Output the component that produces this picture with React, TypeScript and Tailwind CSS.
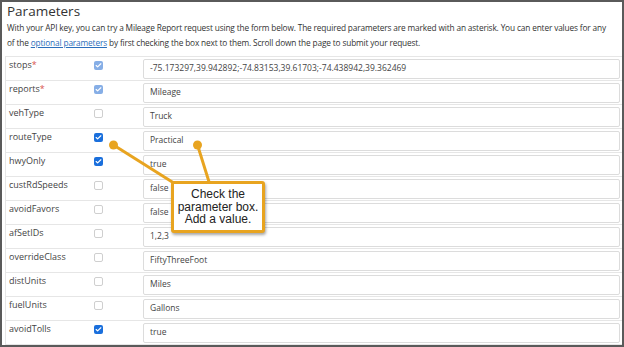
import { Check } from "lucide-react";

type Row = { name: string; value: string; state: "req" | "on" | "off"; required?: boolean };

const rows: Row[] = [
  { name: "stops", value: "-75.173297,39.942892;-74.83153,39.61703;-74.438942,39.362469", state: "req", required: true },
  { name: "reports", value: "Mileage", state: "req", required: true },
  { name: "vehType", value: "Truck", state: "off" },
  { name: "routeType", value: "Practical", state: "on" },
  { name: "hwyOnly", value: "true", state: "on" },
  { name: "custRdSpeeds", value: "false", state: "off" },
  { name: "avoidFavors", value: "false", state: "off" },
  { name: "afSetIDs", value: "1,2,3", state: "off" },
  { name: "overrideClass", value: "FiftyThreeFoot", state: "off" },
  { name: "distUnits", value: "Miles", state: "off" },
  { name: "fuelUnits", value: "Gallons", state: "off" },
  { name: "avoidTolls", value: "true", state: "on" },
];

function Box({ state }: { state: Row["state"] }) {
  if (state === "off") {
    return <span className="block h-[9px] w-[9px] rounded-[2px] border border-[#cfcfcf] bg-white" />;
  }
  return (
    <span
      className={
        "flex h-[9px] w-[9px] items-center justify-center rounded-[2px] " +
        (state === "req" ? "bg-[#86aee6]" : "bg-[#1a6fdc]")
      }
    >
      <Check size={7} strokeWidth={4} color="white" />
    </span>
  );
}

export default function App() {
  return (
    <div
      className="relative h-[347px] w-[624px] overflow-hidden border-2 border-[#5a5a5a] bg-white text-[#333]"
      style={{ fontFamily: '"Open Sans", sans-serif' }}
    >
      <div className="px-[5px]">
        <h2 className="text-[13.5px] leading-[18px] text-[#333]">Parameters</h2>
        <p className="whitespace-nowrap text-[8.3px] leading-[15px] tracking-[-0.15px] text-[#333]">
          With your API key, you can try a Mileage Report request using the form below. The required parameters are
          marked with an asterisk. You can enter values for any
          <br />
          of the <span className="text-[#2a6ebb] underline">optional parameters</span> by first checking the box next to
          them. Scroll down the page to submit your request.
        </p>
      </div>

      <div className="mt-[6px] ml-[3px] border-t border-l border-[#e6e6e6]">
        {rows.map((r) => (
          <div key={r.name} className="flex h-[24px] border-b border-[#e6e6e6]">
            <div className="w-[84px] pl-[3px] pt-[1px] text-[9px] leading-[14px] text-[#444]">
              {r.name}
              {r.required && <span className="text-[#d9534f]">*</span>}
            </div>
            <div className="w-[53px] pl-[4px] pt-[4px]">
              <Box state={r.state} />
            </div>
            <div className="flex flex-1 items-center pr-[2px]">
              <div className="flex h-[20px] w-full items-center rounded-[2px] border border-[#dcdcdc] bg-white pl-[6px] text-[8.5px] text-[#444]">
                {r.value}
              </div>
            </div>
          </div>
        ))}
      </div>

      <svg className="absolute left-0 top-0" width="624" height="347">
        <line x1="111.5" y1="143" x2="175" y2="183" stroke="#e8a420" strokeWidth="3" />
        <line x1="195.5" y1="143" x2="208" y2="183" stroke="#e8a420" strokeWidth="3" />
        <circle cx="111.5" cy="143" r="4.5" fill="#e8a420" />
        <circle cx="195.5" cy="143" r="4.5" fill="#e8a420" />
      </svg>

      <div
        className="absolute left-[169px] top-[179px] flex h-[52px] w-[94px] flex-col items-center justify-center rounded-[3px] border-[3px] border-[#e8a420] bg-white text-center text-[12px] leading-[12.5px] text-[#222] shadow-[1px_2px_3px_rgba(0,0,0,0.35)]"
        style={{ fontFamily: '"Liberation Sans", Arial, sans-serif' }}
      >
        <div>Check the</div>
        <div>parameter box.</div>
        <div>Add a value.</div>
      </div>
    </div>
  );
}
